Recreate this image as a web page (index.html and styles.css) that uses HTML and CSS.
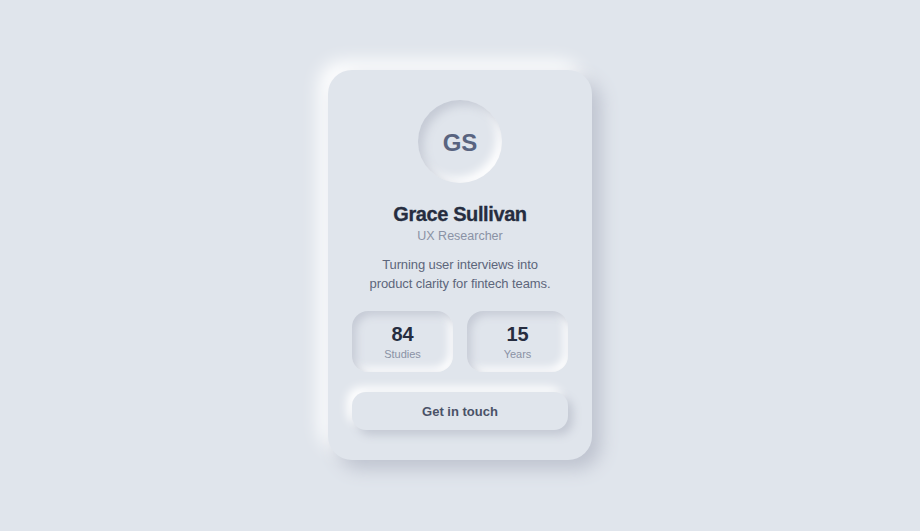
FILE: index.html
```html
<!DOCTYPE html>
<html>
<head>
<meta charset="utf-8">
<link rel="stylesheet" href="styles.css">
</head>
<body>
<div class="page">
  <div class="card">
    <div class="avatar">GS</div>
    <h1 class="name">Grace Sullivan</h1>
    <div class="role">UX Researcher</div>
    <p class="bio">Turning user interviews into<br>product clarity for fintech teams.</p>
    <div class="stats">
      <div class="stat"><div class="num">84</div><div class="label">Studies</div></div>
      <div class="stat"><div class="num">15</div><div class="label">Years</div></div>
    </div>
    <button class="cta">Get in touch</button>
  </div>
</div>
</body>
</html>
```
FILE: styles.css
```css
* { box-sizing: border-box; }
html, body { margin: 0; padding: 0; }
body {
  background: #e0e5ec;
  font-family: "Liberation Sans", Arial, sans-serif;
  width: 920px;
  height: 531px;
  overflow: hidden;
}
.page {
  display: flex;
  justify-content: center;
  padding-top: 70px;
}
.card {
  width: 264px;
  height: 390px;
  background: #e0e5ec;
  border-radius: 24px;
  padding: 30px 24px 30px;
  display: flex;
  flex-direction: column;
  align-items: center;
  box-shadow: 9px 9px 18px #bec3cf, -9px -9px 18px #ffffff;
}
.avatar {
  width: 84px;
  height: 84px;
  border-radius: 50%;
  background: #e0e5ec;
  box-shadow: inset 5px 5px 10px #c5cad5, inset -5px -5px 10px #ffffff;
  display: flex;
  align-items: center;
  justify-content: center;
  padding-top: 2px;
  font-size: 24px;
  font-weight: 700;
  color: #596480;
}
.name {
  margin: 19px 0 0;
  font-size: 20px;
  line-height: 24px;
  font-weight: 700;
  color: #262d40;
  letter-spacing: -0.4px;
  -webkit-text-stroke: 0.3px #262d40;
}
.role {
  margin-top: 1px;
  font-size: 12.5px;
  line-height: 18px;
  color: #8a92a5;
}
.bio {
  margin: 11px 0 0;
  font-size: 13px;
  line-height: 18.5px;
  letter-spacing: -0.1px;
  color: #5d667b;
  text-align: center;
}
.stats {
  margin-top: 18px;
  display: flex;
  gap: 14px;
  width: 100%;
}
.stat {
  flex: 1;
  height: 61px;
  border-radius: 16px;
  background: #e0e5ec;
  box-shadow: inset 4px 4px 8px #c5cad5, inset -4px -4px 8px #ffffff;
  display: flex;
  flex-direction: column;
  align-items: center;
  justify-content: center;
}
.num {
  font-size: 20px;
  line-height: 24px;
  font-weight: 700;
  color: #262d40;
}
.label {
  font-size: 11px;
  line-height: 15px;
  color: #8a92a5;
  margin-top: 1px;
}
.cta {
  margin-top: 20px;
  width: 100%;
  height: 38px;
  border: none;
  border-radius: 14px;
  background: #e0e5ec;
  box-shadow: 5px 5px 10px #c3c8d3, -5px -5px 10px #ffffff;
  font-family: "Liberation Sans", Arial, sans-serif;
  font-size: 13px;
  font-weight: 700;
  color: #4a5267;
}
```
